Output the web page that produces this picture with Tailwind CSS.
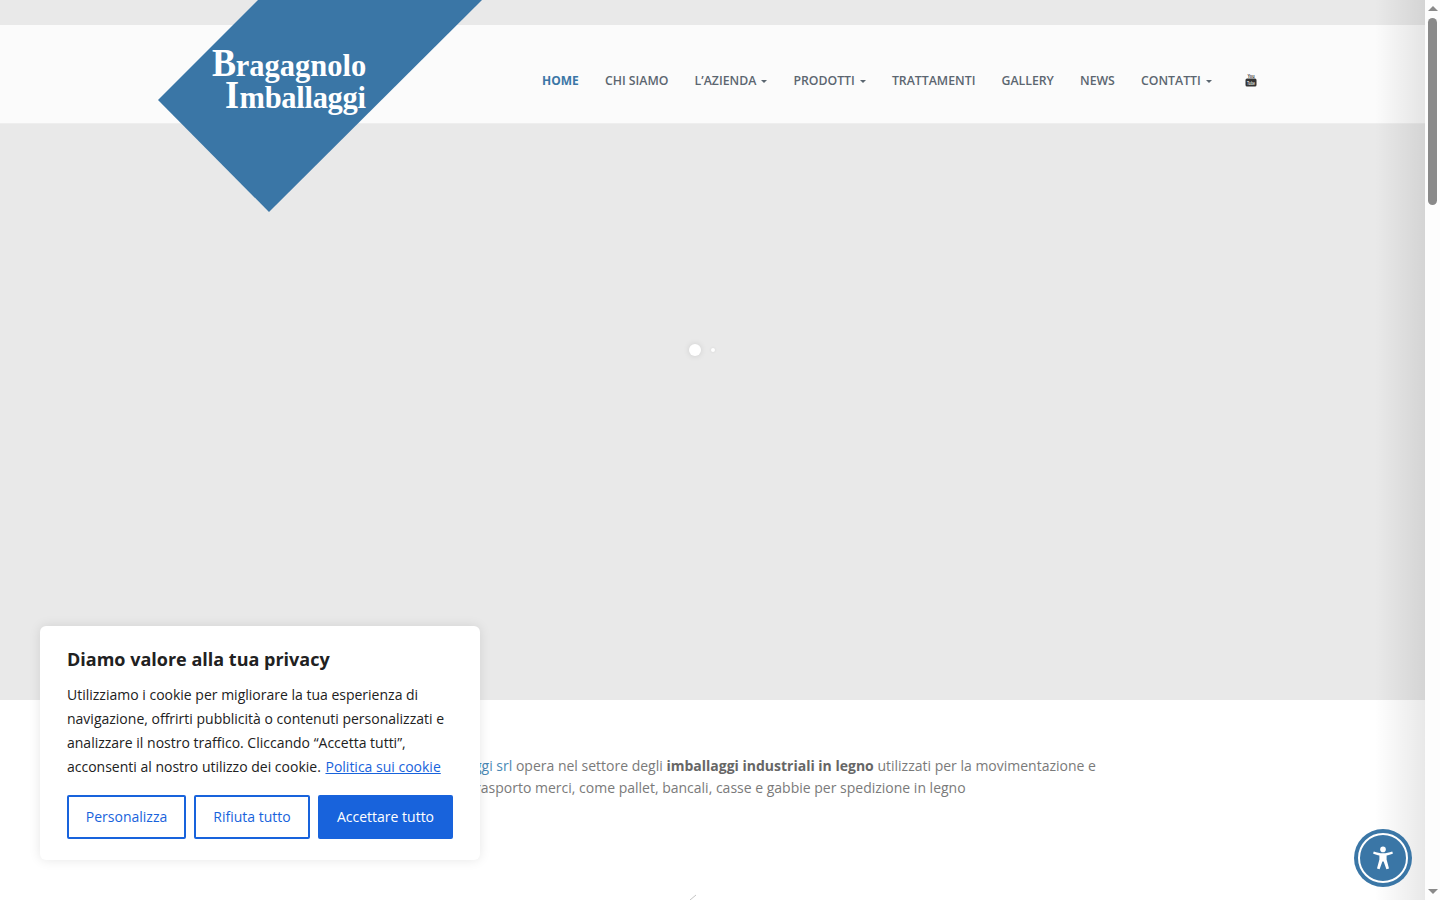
<!DOCTYPE html>
<html lang="it">
<head>
<meta charset="utf-8">
<title>Bragagnolo Imballaggi</title>
<script src="https://cdn.jsdelivr.net/npm/@tailwindcss/browser@4"></script>
</head>
<body class="h-screen overflow-hidden bg-white font-['Open_Sans',sans-serif]">
<div class="flex h-[900px]">
  <main class="relative w-[1425px] h-[900px] overflow-hidden flex flex-col">
    <div class="h-[25px] bg-[#e9e9e9]"></div>
    <header class="h-[98px] bg-[#fbfbfb] pl-[542px] pt-[46px]">
      <nav class="flex items-center h-[20px] gap-[26.1px] text-[12.3px] font-semibold text-[#5b6670] whitespace-nowrap">
        <a class="text-[#3a76a6] font-bold text-[12px]">HOME</a>
        <a>CHI SIAMO</a>
        <a class="flex items-center gap-[5px]">L’AZIENDA <span class="border-x-[3px] border-x-transparent border-t-[3px] border-t-[#5b6670]"></span></a>
        <a class="flex items-center gap-[5px]">PRODOTTI <span class="border-x-[3px] border-x-transparent border-t-[3px] border-t-[#5b6670]"></span></a>
        <a>TRATTAMENTI</a>
        <a>GALLERY</a>
        <a>NEWS</a>
        <a class="flex items-center gap-[5px]">CONTATTI <span class="border-x-[3px] border-x-transparent border-t-[3px] border-t-[#5b6670]"></span></a>
        <svg class="ml-[7px] mb-[2px] overflow-visible" width="12" height="16" viewBox="0 0 12 16" aria-label="YouTube">
          <text x="6" y="5.5" text-anchor="middle" font-size="6" font-weight="700" fill="#333" font-family="Liberation Sans Narrow, Liberation Sans, sans-serif" textLength="7" lengthAdjust="spacingAndGlyphs">You</text>
          <rect x="0.5" y="6.5" width="11" height="8" rx="1.5" fill="#333"/>
          <text x="6" y="12.5" text-anchor="middle" font-size="5" font-weight="700" fill="#ddd" font-family="Liberation Sans, sans-serif" textLength="8" lengthAdjust="spacingAndGlyphs">Tube</text>
        </svg>
      </nav>
    </header>
    <section class="relative h-[577px] bg-[#e9e9e9] border-t border-[#eeeeee]">
      <span class="absolute left-[689px] top-[220px] size-[12px] rounded-full bg-white shadow-[0_0_6px_rgba(0,0,0,0.12)]"></span>
      <span class="absolute left-[711px] top-[224px] size-[4px] rounded-full bg-white shadow-[0_0_3px_rgba(0,0,0,0.1)]"></span>
    </section>
    <section class="relative flex-1 bg-white pt-[55px] text-center text-[14px] leading-[22px] text-[#7a7a7a]">
      <p>La <a class="text-[#4a88b5]">Bragagnolo Imballaggi srl</a> opera nel settore degli <strong class="font-bold text-[#666666]">imballaggi industriali in legno</strong> utilizzati per la movimentazione e<br>il trasporto merci, come pallet, bancali, casse e gabbie per spedizione in legno</p>
      <svg class="absolute left-[688px] top-[193px]" width="10" height="7" viewBox="0 0 10 7"><path d="M2 7 L8 2" stroke="#c4c4c4" stroke-width="1" fill="none"/></svg>
    </section>

    <div class="absolute inset-y-0 right-0 w-[50px] bg-gradient-to-r from-transparent to-black/[0.09] pointer-events-none"></div>

    <div class="absolute left-[158px] top-0 w-[324px] h-[212px]">
      <svg class="absolute inset-0" width="324" height="212" viewBox="0 0 324 212"><polygon points="100,0 324,0 111,212 0,100" fill="#3a76a6"/></svg>
      <div class="absolute left-[54px] top-[43px] font-['Liberation_Serif',serif] font-bold text-white leading-none whitespace-nowrap">
        <div class="flex items-baseline h-[32px]"><span class="inline-block text-[40px] scale-x-[0.9] origin-left mr-[-3px]">B</span><span class="text-[30.5px] tracking-[0px]">ragagnolo</span></div>
        <div class="flex items-baseline h-[31px] pl-[13px]"><span class="text-[40px] scale-x-[0.9] origin-left mr-[-1px]">I</span><span class="text-[30.5px] tracking-[-0.3px]">mballaggi</span></div>
      </div>
    </div>

    <div class="absolute left-[40px] top-[626px] w-[440px] h-[234px] bg-white rounded-[6px] shadow-[0_0_12px_rgba(0,0,0,0.1)] px-[27px] pt-[20px]">
      <h2 class="text-[18px] leading-[26px] font-bold text-[#212121]">Diamo valore alla tua privacy</h2>
      <p class="mt-[11px] text-[14px] leading-[24px] text-[#212121] whitespace-nowrap">Utilizziamo i cookie per migliorare la tua esperienza di<br>navigazione, offrirti pubblicità o contenuti personalizzati e<br>analizzare il nostro traffico. Cliccando “Accetta tutti”,<br>acconsenti al nostro utilizzo dei cookie. <a class="text-[#1863dc] underline ml-[1px]">Politica sui cookie</a></p>
      <div class="mt-[16px] flex gap-[8px] text-[14px]">
        <button class="w-[119px] h-[44px] pb-[2px] rounded-[2px] border-2 border-[#1863dc] text-[#1863dc]">Personalizza</button>
        <button class="w-[116px] h-[44px] pb-[2px] rounded-[2px] border-2 border-[#1863dc] text-[#1863dc]">Rifiuta tutto</button>
        <button class="w-[135px] h-[44px] pb-[2px] rounded-[2px] bg-[#1863dc] text-white">Accettare tutto</button>
      </div>
    </div>

    <div class="absolute left-[1354px] top-[829px] size-[58px] rounded-full bg-[#3a76a6] flex items-center justify-center">
      <div class="size-[50px] rounded-full border-2 border-white flex items-center justify-center">
        <svg width="24" height="24" viewBox="0 0 24 24" fill="white"><circle cx="12" cy="3.4" r="2.8"/><path d="M2 7.6 L2.8 5.4 C6 6.6 9 7.2 12 7.2 C15 7.2 18 6.6 21.2 5.4 L22 7.6 C19.6 8.6 17.4 9.3 15.6 9.6 L15.6 13.5 L18 22.4 L15.4 23.2 L12.6 15.6 L11.4 15.6 L8.6 23.2 L6 22.4 L8.4 13.5 L8.4 9.6 C6.6 9.3 4.4 8.6 2 7.6 Z"/></svg>
      </div>
    </div>
  </main>
  <aside class="w-[15px] h-[900px] bg-[#fdfdfd] flex flex-col items-center pt-[6px] pb-[6px]">
    <span class="border-x-[5px] border-x-transparent border-b-[5px] border-b-[#8a8a8a]"></span>
    <span class="mt-[7px] w-[9px] h-[187px] rounded-full bg-[#8a8a8a]"></span>
    <span class="mt-auto border-x-[5px] border-x-transparent border-t-[5px] border-t-[#8a8a8a]"></span>
  </aside>
</div>
</body>
</html>
